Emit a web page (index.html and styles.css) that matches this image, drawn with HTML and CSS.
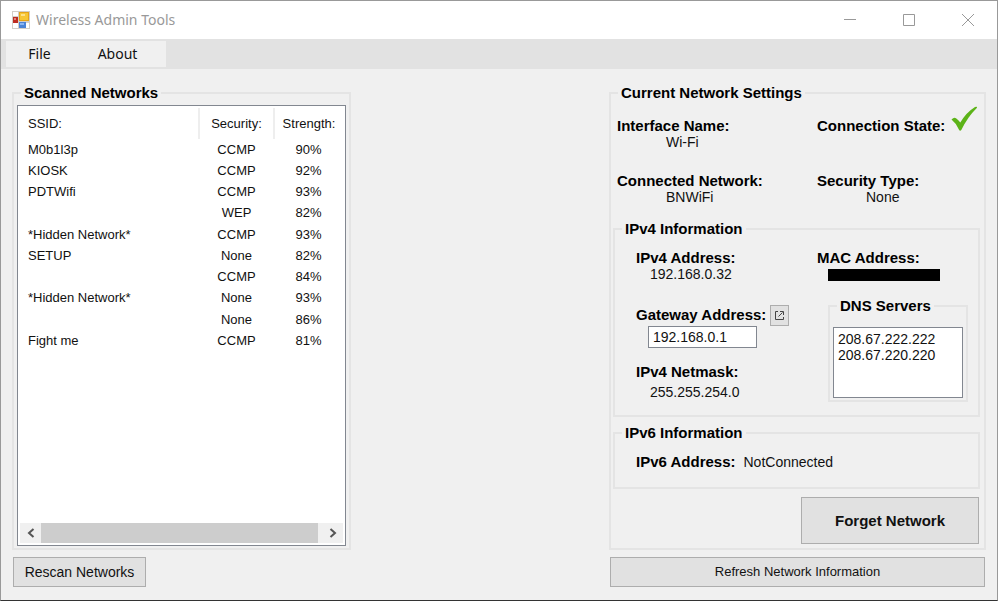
FILE: index.html
```html
<!DOCTYPE html>
<html lang="en">
<head>
<meta charset="utf-8">
<title>Wireless Admin Tools</title>
<link rel="stylesheet" href="styles.css">
</head>
<body>
<div class="window">
  <header class="titlebar">
    <svg class="app-icon" width="18" height="18" viewBox="0 0 18 18" aria-hidden="true">
      <rect width="18" height="18" fill="#d2cec8"/>
      <rect x="1" y="1" width="5" height="4" fill="#fff"/>
      <rect x="1" y="12" width="5" height="5" fill="#fff"/>
      <rect x="14" y="12" width="3" height="5" fill="#fff"/>
      <rect x="1" y="6" width="5" height="6" fill="#bd2c22"/>
      <rect x="2" y="7" width="2" height="2" fill="#e4877c"/>
      <rect x="7" y="1" width="10" height="9" fill="#e5a419"/>
      <rect x="8" y="2" width="8" height="7" fill="#f7c634"/>
      <rect x="9" y="3" width="4" height="2" fill="#fde18a"/>
      <rect x="7" y="11" width="7" height="6" fill="#4a83d6"/>
      <rect x="8" y="12" width="4" height="2" fill="#8ab5f1"/>
    </svg>
    <h1 class="title">Wireless Admin Tools</h1>
    <button class="caption" type="button" aria-label="Minimize"><svg width="14" height="14" viewBox="0 0 14 14"><path d="M1 6.500h12"/></svg></button>
    <button class="caption" type="button" aria-label="Maximize"><svg width="14" height="14" viewBox="0 0 14 14"><path d="M1.500 1.500h11v11h-11z"/></svg></button>
    <button class="caption" type="button" aria-label="Close"><svg width="14" height="14" viewBox="0 0 14 14"><path d="M1 1l12 12M13 1L1 13"/></svg></button>
  </header>
  <nav class="menubar">
    <div class="menu">
      <button class="menu-item" type="button">File</button>
      <button class="menu-item" type="button">About</button>
    </div>
  </nav>
  <main class="content">
    <section class="column">
      <fieldset class="group scanned">
        <legend>Scanned Networks</legend>
        <div class="listview">
          <table class="networks">
            <thead>
              <tr><th class="ssid">SSID:</th><th class="security">Security:</th><th>Strength:</th></tr>
            </thead>
            <tbody>
              <tr><td>M0b1l3p</td><td>CCMP</td><td>90%</td></tr>
              <tr><td>KIOSK</td><td>CCMP</td><td>92%</td></tr>
              <tr><td>PDTWifi</td><td>CCMP</td><td>93%</td></tr>
              <tr><td></td><td>WEP</td><td>82%</td></tr>
              <tr><td>*Hidden Network*</td><td>CCMP</td><td>93%</td></tr>
              <tr><td>SETUP</td><td>None</td><td>82%</td></tr>
              <tr><td></td><td>CCMP</td><td>84%</td></tr>
              <tr><td>*Hidden Network*</td><td>None</td><td>93%</td></tr>
              <tr><td></td><td>None</td><td>86%</td></tr>
              <tr><td>Fight me</td><td>CCMP</td><td>81%</td></tr>
            </tbody>
          </table>
          <div class="scrollbar">
            <button class="scroll-button" type="button" aria-label="Scroll left"><svg width="8" height="10" viewBox="0 0 8 10"><path d="M6.500 1L2 5l4.500 4"/></svg></button>
            <div class="thumb"></div>
            <button class="scroll-button" type="button" aria-label="Scroll right"><svg width="8" height="10" viewBox="0 0 8 10"><path d="M1.500 1L6 5l-4.500 4"/></svg></button>
          </div>
        </div>
      </fieldset>
      <button class="button rescan" type="button">Rescan Networks</button>
    </section>

    <section class="column">
      <fieldset class="group settings">
        <legend>Current Network Settings</legend>
        <dl class="summary">
          <div><dt>Interface Name:</dt><dd>Wi-Fi</dd></div>
          <div class="state">
            <dt>Connection State:</dt>
            <dd><svg class="check" role="img" aria-label="Connected" width="27" height="26" viewBox="0 0 27 26"><path d="M.500 13.500Q3 11 5 12.200Q7.500 14 9.300 16.500Q15 6.500 24 .900Q26.800.200 25.800 2Q17 10.500 10.300 24Q9 25.500 8 23.800Q5.500 17.500.500 13.500z" fill="#5cb318"/></svg></dd>
          </div>
          <div><dt>Connected Network:</dt><dd>BNWiFi</dd></div>
          <div><dt>Security Type:</dt><dd>None</dd></div>
        </dl>

        <fieldset class="group ipv4">
          <legend>IPv4 Information</legend>
          <div class="ipv4-body">
            <div class="ipv4-left">
              <dl class="entry"><dt>IPv4 Address:</dt><dd>192.168.0.32</dd></dl>
              <div class="gateway">
                <div class="gateway-head">
                  <label for="gateway">Gateway Address:</label>
                  <button class="open" type="button" aria-label="Open gateway page"><svg width="11" height="11" viewBox="0 0 11 11"><path d="M4 1.500H1.500v8H9.500V7M4.500 6.500L8.500 2.500M6 1.500h3.500V5"/></svg></button>
                </div>
                <input id="gateway" type="text" value="192.168.0.1">
              </div>
              <dl class="entry netmask"><dt>IPv4 Netmask:</dt><dd>255.255.254.0</dd></dl>
            </div>
            <div class="ipv4-right">
              <dl class="mac"><dt>MAC Address:</dt><dd class="redacted"></dd></dl>
              <fieldset class="group dns">
                <legend>DNS Servers</legend>
                <ul class="servers"><li>208.67.222.222</li><li>208.67.220.220</li></ul>
              </fieldset>
            </div>
          </div>
        </fieldset>

        <fieldset class="group ipv6">
          <legend>IPv6 Information</legend>
          <dl class="inline-entry"><dt>IPv6 Address:</dt><dd>NotConnected</dd></dl>
        </fieldset>

        <button class="button forget" type="button">Forget Network</button>
      </fieldset>
      <button class="button refresh" type="button">Refresh Network Information</button>
    </section>
  </main>
</div>
</body>
</html>
```
FILE: styles.css
```css
* { box-sizing: border-box; }

body {
  margin: 0;
  color: #111;
  background: #f0f0f0;
  font: 14px/16px "Liberation Sans", Arial, sans-serif;
}

button, input { font: inherit; color: inherit; }
button { padding: 0; }
dl, dd, ul { margin: 0; padding: 0; }
dt, legend, label {
  color: #000;
  font-size: 15px;
  font-weight: bold;
  white-space: nowrap;
}
svg { display: block; fill: none; }

.window {
  display: flex;
  flex-direction: column;
  min-height: 100vh;
  border: 1px solid #999;
  border-bottom-color: #333;
}

.titlebar {
  display: flex;
  align-items: center;
  height: 38px;
  padding-left: 11px;
  background: #fff;
}

.title {
  flex: 1;
  margin: 0 0 0 6px;
  color: #999;
  font: 14px/20px "Noto Sans", "Segoe UI", sans-serif;
}

.caption {
  display: grid;
  place-items: center;
  width: 59px;
  height: 38px;
  border: 0;
  background: none;
  stroke: #999;
}

.menubar {
  height: 30px;
  padding: 2px 5px;
  background: #e2e2e2;
}

.menu {
  display: flex;
  width: 160px;
  height: 26px;
  background: #f0f0f0;
}

.menu-item {
  width: 67px;
  border: 0;
  background: none;
  font: 14px/24px "Noto Sans", "Segoe UI", sans-serif;
}
.menu-item + .menu-item { width: 89px; }

.content {
  flex: 1;
  display: grid;
  grid-template-columns: 339px 377px;
  justify-content: space-between;
  padding: 16px 11px 13px;
}

.column {
  display: flex;
  flex-direction: column;
  gap: 7px;
}

.group {
  min-width: 0;
  margin: 0;
  padding: 0;
  border: 2px solid #e4e4e4;
}
.group > legend {
  margin-left: 7px;
  padding: 0 3px;
}

.scanned {
  flex: 1;
  display: flex;
  flex-direction: column;
}

.listview {
  flex: 1;
  display: flex;
  flex-direction: column;
  justify-content: space-between;
  margin: 4px 3px 2px;
  padding: 2px;
  border: 1px solid #828790;
  background: #fff;
}

.networks {
  width: 100%;
  border-collapse: collapse;
  table-layout: fixed;
  font-size: 13px;
}
.networks th {
  height: 31px;
  padding: 0;
  font-weight: normal;
  border-left: 2px solid #eee;
}
.networks th:first-child { border: 0; }
.networks td {
  height: 21px;
  padding: 0;
  text-align: center;
}
.networks tr:nth-child(4n) td { height: 22px; }
.networks th:first-child, .networks td:first-child {
  padding-left: 8px;
  text-align: left;
}
.ssid { width: 179px; }
.security { width: 75px; }

.scrollbar {
  display: flex;
  height: 20px;
  background: #f0f0f0;
}
.scroll-button {
  display: grid;
  place-items: center;
  width: 21px;
  border: 0;
  background: none;
  stroke: #555;
  stroke-width: 2;
}
.thumb {
  flex: 1;
  margin-right: 4px;
  background: #cdcdcd;
}

.button {
  height: 30px;
  border: 1px solid #adadad;
  background: #e1e1e1;
}
.rescan { width: 133px; margin-left: 1px; }
.refresh { margin: 0 1px; font-size: 13px; }
.forget {
  align-self: flex-end;
  width: 178px;
  height: 47px;
  margin: 8px 5px 4px 0;
  font-size: 15px;
  font-weight: bold;
}

.settings {
  flex: 1;
  display: flex;
  flex-direction: column;
}

.summary {
  display: grid;
  grid-template-columns: 200px 1fr;
  row-gap: 23px;
  padding: 17px 2px 16px 6px;
}
.summary dd { padding-left: 49px; }
.state { position: relative; }
.check {
  position: absolute;
  top: -12px;
  right: 4px;
}

.ipv4 { height: 196px; margin: 0 4px 8px 2px; }
.ipv4-body {
  display: grid;
  grid-template-columns: 181px 1fr;
  padding: 13px 10px 0 21px;
}
.entry dd { padding-left: 14px; }

.gateway { margin-top: 22px; }
.gateway-head {
  display: flex;
  align-items: center;
  gap: 4px;
  height: 22px;
}
.open {
  display: grid;
  place-items: center;
  width: 19px;
  height: 21px;
  border: 1px solid #adadad;
  background: #e1e1e1;
  stroke: #444;
}
.gateway input {
  display: block;
  width: 109px;
  height: 22px;
  margin-left: 12px;
  padding: 0 4px;
  border: 1px solid #828790;
  background: #fff;
}
.netmask { margin-top: 16px; }
.netmask dd { margin-top: 4px; }

.redacted {
  width: 112px;
  height: 12px;
  margin: 3px 0 0 11px;
  background: #000;
}
.dns { margin: 17px 0 0 11px; }
.servers {
  height: 71px;
  margin: 13px 3px 2px;
  padding: 3px 4px;
  border: 1px solid #828790;
  background: #fff;
  list-style: none;
}

.ipv6 { height: 64px; margin: 0 4px 0 2px; }
.inline-entry {
  display: flex;
  gap: 8px;
  padding: 13px 21px;
}
```
